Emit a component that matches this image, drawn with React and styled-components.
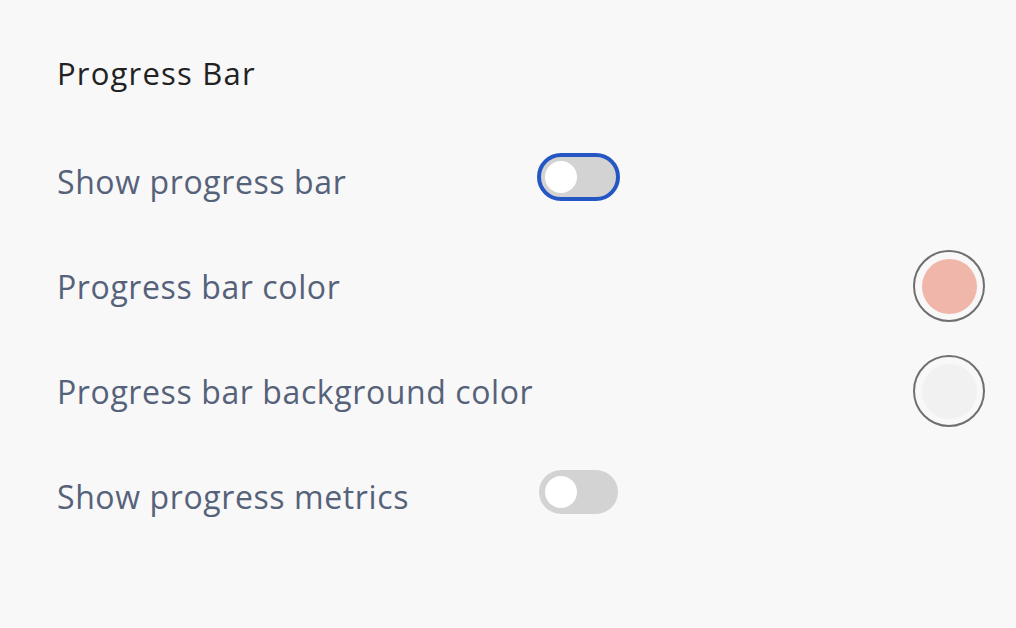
import React, { useState } from "react";
import styled, { createGlobalStyle } from "styled-components";

const GlobalStyle = createGlobalStyle`
  html, body {
    margin: 0;
    padding: 0;
    background: #f8f8f8;
  }
  body {
    font-family: "Open Sans", "Lato", sans-serif;
  }
`;

const Panel = styled.section`
  width: 1016px;
  height: 628px;
  box-sizing: border-box;
  padding: 52px 31px 0 57px;
  background: #f8f8f8;
`;

const Heading = styled.h2`
  margin: 0 0 51px;
  font-size: 31px;
  line-height: 42px;
  font-weight: 500;
  letter-spacing: 1.2px;
  color: #222222;
`;

const List = styled.div`
  display: flex;
  flex-direction: column;
  gap: 33px;
`;

const Row = styled.div`
  display: grid;
  grid-template-columns: 482px 1fr;
  align-items: center;
  height: 72px;
`;

const Label = styled.span`
  font-size: 32px;
  font-weight: 500;
  letter-spacing: 0.6px;
  color: #56627a;
`;

const Track = styled.button`
  justify-self: start;
  margin-bottom: 9px;
  position: relative;
  width: 79px;
  height: 44px;
  padding: 0;
  border: none;
  border-radius: 22px;
  background: #d3d3d3;
  cursor: pointer;
  outline: ${(p) => (p.$focused ? "4px solid #2456c4" : "none")};
  outline-offset: -2px;
`;

const Knob = styled.span`
  position: absolute;
  top: 6px;
  left: ${(p) => (p.$on ? "41px" : "6px")};
  width: 32px;
  height: 32px;
  border-radius: 50%;
  background: #ffffff;
`;

const Swatch = styled.button`
  justify-self: end;
  width: 72px;
  height: 72px;
  padding: 0;
  border: 2px solid #6f6f6f;
  border-radius: 50%;
  background: #f8f8f8;
  display: grid;
  place-items: center;
  cursor: pointer;
`;

const Dot = styled.span`
  width: 55px;
  height: 55px;
  border-radius: 50%;
  background: ${(p) => p.$color};
`;

function Toggle({ focused }) {
  const [on, setOn] = useState(false);
  return (
    <Track $focused={focused} onClick={() => setOn(!on)} aria-pressed={on}>
      <Knob $on={on} />
    </Track>
  );
}

export default function App() {
  return (
    <>
      <GlobalStyle />
      <Panel>
        <Heading>Progress Bar</Heading>
        <List>
          <Row>
            <Label>Show progress bar</Label>
            <Toggle focused />
          </Row>
          <Row>
            <Label>Progress bar color</Label>
            <Swatch>
              <Dot $color="#f0b6aa" />
            </Swatch>
          </Row>
          <Row>
            <Label>Progress bar background color</Label>
            <Swatch>
              <Dot $color="#f1f1f1" />
            </Swatch>
          </Row>
          <Row>
            <Label>Show progress metrics</Label>
            <Toggle />
          </Row>
        </List>
      </Panel>
    </>
  );
}
